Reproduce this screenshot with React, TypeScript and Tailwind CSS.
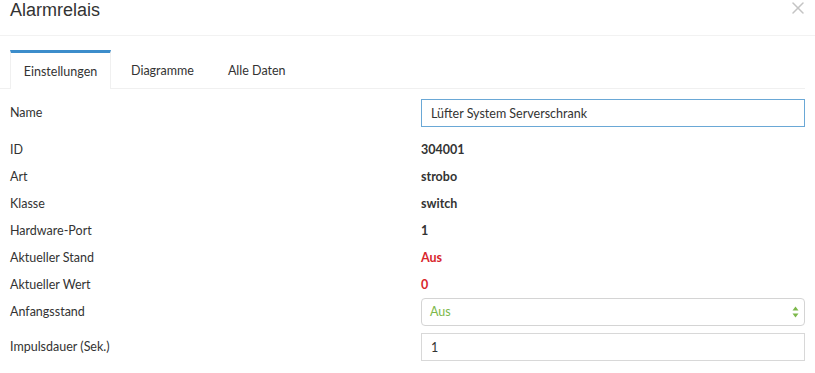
import { X } from "lucide-react";

const rows: { label: string; value: string; color?: string }[] = [
  { label: "ID", value: "304001" },
  { label: "Art", value: "strobo" },
  { label: "Klasse", value: "switch" },
  { label: "Hardware-Port", value: "1" },
  { label: "Aktueller Stand", value: "Aus", color: "text-[#d8262c]" },
  { label: "Aktueller Wert", value: "0", color: "text-[#d8262c]" },
];

export default function App() {
  return (
    <div className="w-[815px] h-[373px] overflow-hidden bg-white text-[#333] font-['Lato',sans-serif] text-[12.5px]">
      {/* header */}
      <div className="h-[36px] border-b border-[#f2f2f2] flex items-start justify-between pl-[10px] pr-[7px]">
        <h1 className="text-[18px] leading-none pt-[1px] font-['Liberation_Sans',sans-serif] text-[#333]">
          Alarmrelais
        </h1>
        <X className="w-[20px] h-[20px] mt-[-2px] text-[#c4c4c4]" strokeWidth={1.8} />
      </div>

      {/* tabs */}
      <div className="mt-[14px] mr-[10px] flex border-b border-[#f0f0f0] h-[39px]">
        <div className="ml-[10px] w-[101px] border-t-[3px] border-[#3c8dcb] border-x border-x-[#f0f0f0] bg-white flex items-center justify-center -mb-px pt-[3px]">
          Einstellungen
        </div>
        <div className="pl-[20px] pr-[18px] flex items-center pt-[5px]">Diagramme</div>
        <div className="px-[16px] flex items-center pt-[5px]">Alle Daten</div>
      </div>

      {/* form */}
      <div className="pl-[10px] pr-[10px] mt-[10px]">
        <div className="flex items-center h-[28px]">
          <div className="w-[411px] pt-[1px]">Name</div>
          <input
            className="flex-1 h-[28px] border border-[#6aa8d6] px-[9px] outline-none text-[#333] font-['Lato',sans-serif] text-[12.5px]"
            defaultValue="Lüfter System Serverschrank"
          />
        </div>
        <div className="mt-[10px]">
          {rows.map((r) => (
            <div key={r.label} className="flex items-center h-[27px]">
              <div className="w-[411px]">{r.label}</div>
              <div className={"font-bold " + (r.color ?? "text-[#333]")}>{r.value}</div>
            </div>
          ))}
        </div>
        <div className="flex items-center h-[28px] mt-[-1px]">
          <div className="w-[411px]">Anfangsstand</div>
          <div className="flex-1 h-[28px] border border-[#d4d4d4] rounded-[4px] flex items-center justify-between px-[8px] text-[#7cb84a]">
            <span>Aus</span>
            <svg width="7" height="12" viewBox="0 0 7 12" className="mr-[-3px]">
              <path d="M3.5 0.5 L6.5 4.5 L0.5 4.5 Z" fill="#7cb84a" />
              <path d="M3.5 11.5 L6.5 7.5 L0.5 7.5 Z" fill="#7cb84a" />
            </svg>
          </div>
        </div>
        <div className="flex items-center h-[28px] mt-[7px]">
          <div className="w-[411px]">Impulsdauer (Sek.)</div>
          <input
            className="flex-1 h-[28px] border border-[#d8d8d8] px-[9px] outline-none text-[#333] font-['Lato',sans-serif] text-[12.5px]"
            defaultValue="1"
          />
        </div>
      </div>
    </div>
  );
}
